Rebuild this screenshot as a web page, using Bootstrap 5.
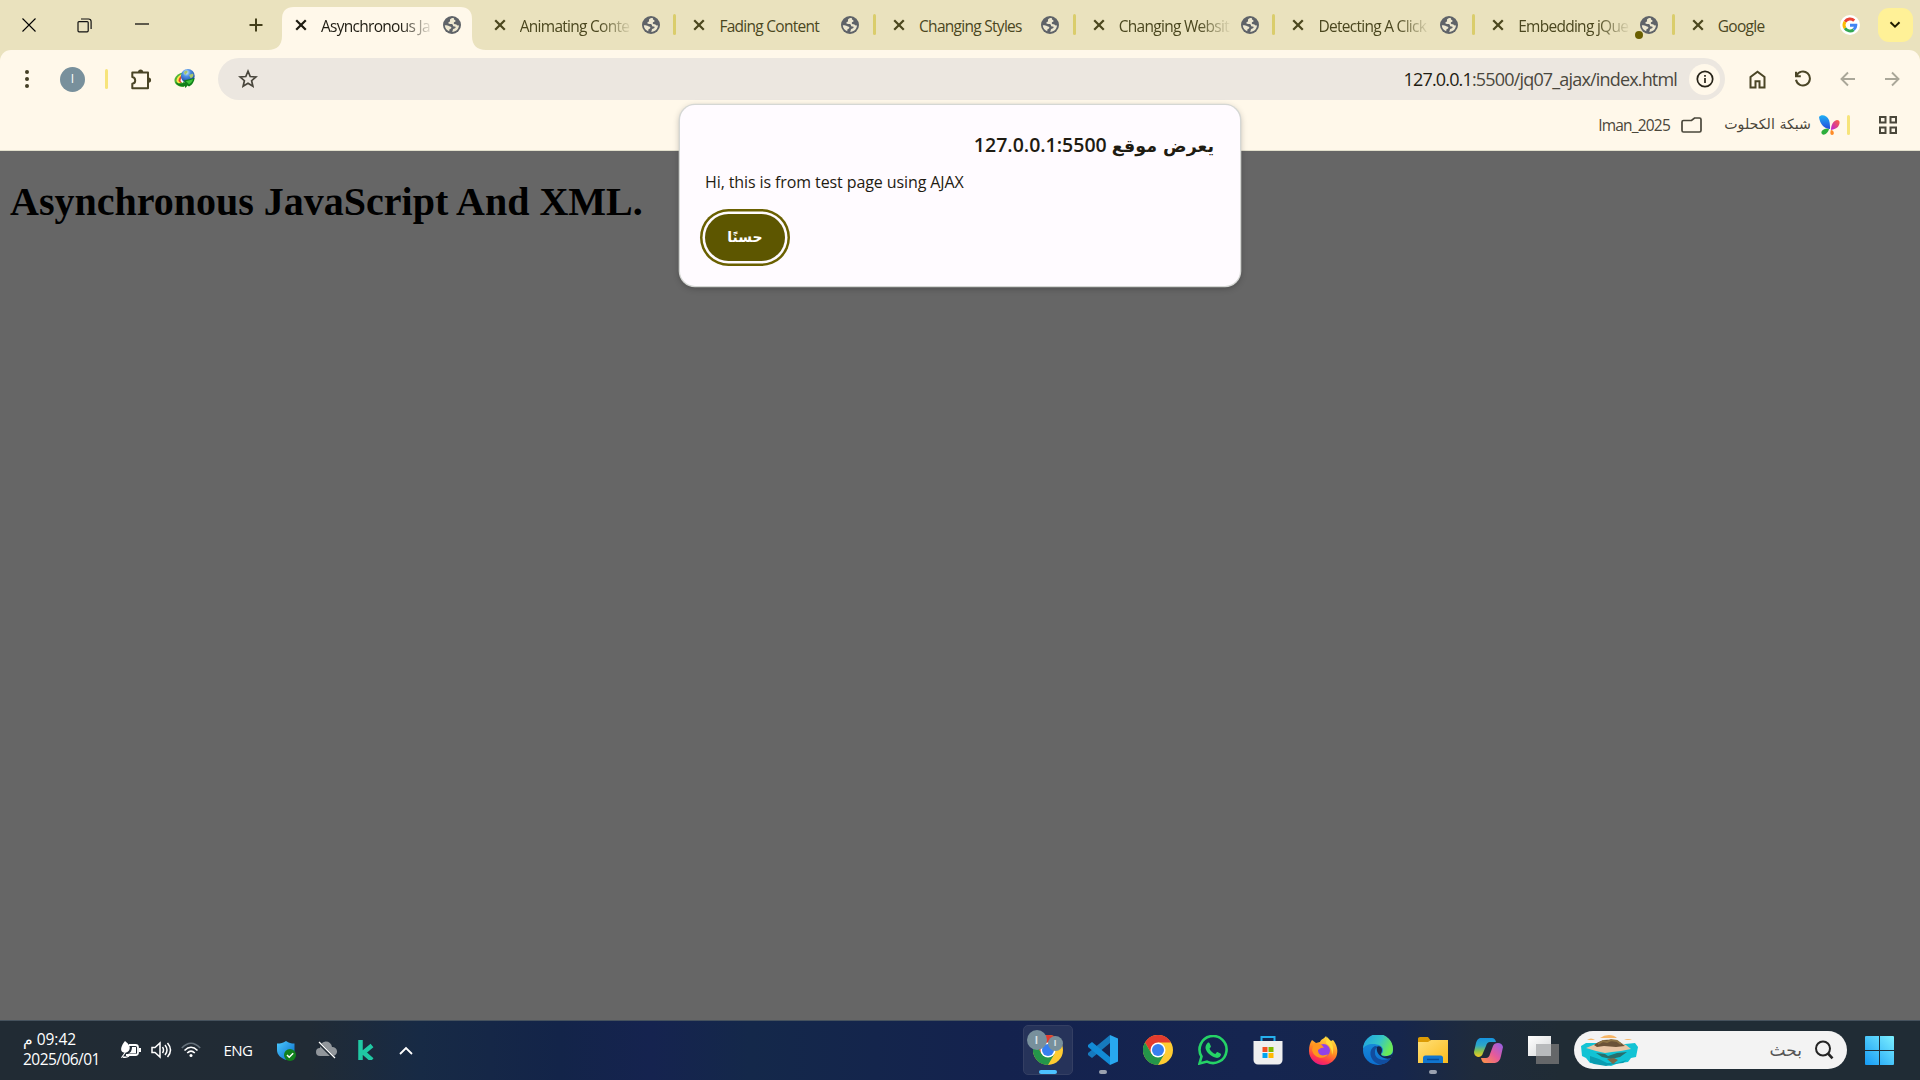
<!DOCTYPE html>
<html lang="ar">
<head>
<meta charset="utf-8">
<title>Asynchronous JavaScript And XML</title>
<link href="https://cdn.jsdelivr.net/npm/bootstrap@5.3.0/dist/css/bootstrap.min.css" rel="stylesheet">
<style>
html,body{height:100%}
body{width:1920px;height:1080px;overflow:hidden;background:#666;font-family:"Open Sans","DejaVu Sans",sans-serif;color:#1f1c12;line-height:1.2}
svg{display:block;flex:none}
.strip{height:50px;background:#eae2be}
.win-area{width:277px}
.cell{display:flex;align-items:center;justify-content:center;flex:none;height:100%}
.tab-item{width:199.7px;height:50px;position:relative;flex:none;padding-left:16px;color:#4b471f}
.tab-item .title{position:relative;width:113px;margin-left:13px;font-size:15.5px;letter-spacing:-.72px;white-space:nowrap;line-height:22px;padding-top:1px}
.faded{-webkit-mask-image:linear-gradient(90deg,#000 70%,transparent 100%);mask-image:linear-gradient(90deg,#000 70%,transparent 100%)}
.tab-item svg{position:relative}
.tab-item.divided::after{content:"";position:absolute;right:0;top:14px;width:3px;height:21px;border-radius:2px;background:#dacd6c}
.tab-item.current{color:#1f1c12;padding-left:17px}
.tab-shape{position:absolute!important;left:-9px;top:7px}
.globe{margin-left:9px}
.dot{position:absolute;left:160px;top:31px;width:8px;height:8px;border-radius:50%;background:#6a5f00}
.tab-search{width:35px;height:34px;border-radius:11px;background:#fff197;margin-left:3px}
.chrome-body{background:#fff8ea;height:101px;border-radius:11px 11px 0 0;border-bottom:1px solid #e2dfcc}
.toolbar{height:58px}
.avatar{width:25px;height:25px;border-radius:50%;background:#78909c;color:#fff;font-size:12px}
.bar-sep{width:3px;height:20px;border-radius:2px;background:#f7e47b;flex:none}
.omnibox{width:1507px;height:42px;border-radius:21px;background:#ece7e0;margin-left:6px}
.star{margin-left:20px}
.url{font-size:18px;letter-spacing:-.83px;color:#4a473e;white-space:nowrap;padding-top:1px}
.url b{font-weight:400;color:#1f1c12}
.info{width:31px;height:31px;border-radius:50%;background:#fff8ea;margin:0 5px 0 12px}
.bookmarks{height:42px;font-size:15.5px;color:#4b473b}
.page-title{font:bold 40px/46px "Liberation Serif",serif;color:#000;margin:28px 0 0 10px}
.alert-box{position:absolute;left:680px;top:105px;width:560px;height:181px;border-radius:15px;background:#fffbff;box-shadow:0 0 0 1.3px #d5d7d4,0 2px 7px rgba(0,0,0,.3);padding:26px 26px 0 25px}
.alert-head{font-size:19.5px;font-weight:600;letter-spacing:-1.45px;line-height:28px;text-align:right;white-space:nowrap}
.alert-head span{font-size:17.5px;letter-spacing:0}
.alert-text{font-size:16px;letter-spacing:-.1px;line-height:22px;margin-top:11px;white-space:nowrap}
.ok-btn{width:80px;height:47px;border-radius:24px;background:#5d5600;color:#fff;font-size:14px;font-weight:600;padding:0;border:0;box-shadow:0 0 0 2.5px #fffbff,0 0 0 5px #6a6000;margin-top:21px}
.page-area{height:869px}
.taskbar{height:60px;border-top:1px solid #46525d;padding-bottom:1px;background:linear-gradient(90deg,#212b34 0,#212b35 310px,#172a45 420px,#132449 560px,#15234f 650px,#14284a 750px,#14224e 1000px,#152550 1250px,#16264c 1400px,#1f2b3c 1475px,#202c35 1560px);color:#fff}
.clock{width:110px;padding-left:23px;font-size:15.5px;line-height:20px;letter-spacing:-.55px;white-space:nowrap;margin-top:-2px}
.app{width:55px;height:59px;position:relative;display:flex;align-items:center;justify-content:center;flex:none}
.app.running::after{content:"";position:absolute;bottom:6px;width:8px;height:4px;border-radius:2px;background:#9ba2b0}
.app.active::after{width:18px;background:#4cc2ff}
.app.active::before{content:"";position:absolute;inset:4px 2.5px 5px;border-radius:5px;background:#26335a;border:1px solid #343f63}
.app svg{position:relative}
.chip{position:absolute;border-radius:50%;background:#78909c;color:#dfe5e8;font-size:10px;font-weight:700;display:flex;align-items:center;justify-content:center}
.search-pill{width:273px;height:38px;border-radius:19px;background:#f3f3f3;color:#555;font-size:17px;margin-left:3.5px;padding:0 13px 0 6px}
.ar{font-family:"DejaVu Sans",sans-serif}
</style>
<script src="https://cdn.jsdelivr.net/npm/bootstrap@5.3.0/dist/js/bootstrap.bundle.min.js"></script>
</head>
<body>
<svg width="0" height="0" class="position-absolute">
<defs>
<linearGradient id="shieldG" x1="0" y1="0" x2="1" y2="1"><stop offset="0" stop-color="#4ccbff"/><stop offset="1" stop-color="#0868c8"/></linearGradient>
<linearGradient id="ffG" x1=".7" y1="0" x2=".3" y2="1"><stop offset="0" stop-color="#ffe642"/><stop offset=".5" stop-color="#ff8a22"/><stop offset=".8" stop-color="#ff354f"/><stop offset="1" stop-color="#e31587"/></linearGradient>
<linearGradient id="edgeG" x1="0" y1="0" x2="1" y2=".4"><stop offset="0" stop-color="#1d9fe4"/><stop offset=".6" stop-color="#35c5c7"/><stop offset="1" stop-color="#6aea58"/></linearGradient>
<linearGradient id="edgeB" x1="0" y1="0" x2="0" y2="1"><stop offset="0" stop-color="#1b94dc"/><stop offset="1" stop-color="#0c6fd0"/></linearGradient>
<linearGradient id="foldG" x1="0" y1="0" x2="1" y2="1"><stop offset="0" stop-color="#ffe079"/><stop offset="1" stop-color="#fbbb1c"/></linearGradient>
<linearGradient id="winG" x1="0" y1="1" x2="1" y2="0"><stop offset="0" stop-color="#159bf5"/><stop offset="1" stop-color="#7df0ff"/></linearGradient>
<linearGradient id="copA" x1="0" y1="0" x2="0" y2="1"><stop offset="0" stop-color="#1693df"/><stop offset=".4" stop-color="#2fa8c6"/><stop offset=".7" stop-color="#8fc447"/><stop offset="1" stop-color="#f7ca22"/></linearGradient>
<linearGradient id="copB" x1="1" y1="0" x2="0" y2="1"><stop offset="0" stop-color="#8f60ea"/><stop offset=".5" stop-color="#e65a9b"/><stop offset="1" stop-color="#ff983f"/></linearGradient>
<linearGradient id="bflyA" x1="0" y1="0" x2="0" y2="1"><stop offset="0" stop-color="#1fb0f4"/><stop offset="1" stop-color="#2449dd"/></linearGradient>
<linearGradient id="bflyB" x1="1" y1="0" x2="0" y2="1"><stop offset="0" stop-color="#ff6438"/><stop offset="1" stop-color="#bc20dc"/></linearGradient>
<linearGradient id="greyG" x1="0" y1="0" x2="1" y2="1"><stop offset="0" stop-color="#fff"/><stop offset="1" stop-color="#d6d8da"/></linearGradient>
<radialGradient id="ball" cx=".4" cy=".25" r=".8"><stop offset="0" stop-color="#d9f4ff"/><stop offset=".35" stop-color="#4f91e4"/><stop offset="1" stop-color="#103b91"/></radialGradient>
<symbol id="globe" viewBox="0 0 18 18"><circle cx="9" cy="9" r="9" fill="#5f6368"/><path d="M10.600 1.900C9 1.900 7.900 2.400 7.200 3.300c-.6.800.1 1.300-.2 1.900-.4.800-1.800.7-1.700 1.800.1.900 1.500.9 2.700.9 1.500 0 2 .6 2 1.500 0 .7.600 1 1.500 1 1.100 0 1.300.6 1 1.300-.4.900-1.700.6-2.300 1.200-.7.700-.1 1.700-1.200 2.900 3.900.1 6.900-2.900 7-6.600-1 .6-1.900.3-2.400-.5-.5-.9-1.500-.5-2.300-.8-.9-.4-.6-1.600.2-1.900.9-.3 1.300-.8.9-1.500-.5-.8-1.600-.7-1.500-1.500 0-.4.200-.7-.3-1.100zM1.800 9.300c.1 2.700 1.900 5.100 4.400 6 .3-.9-.1-1.400.4-2 .5-.6 1.700-.5 1.800-1.500.1-1.200-1.100-1.300-2.100-1.600-1.300-.4-2.500-1-4.500-.9z" fill="#eee8d0"/></symbol>
<symbol id="close" viewBox="0 0 12 12"><path d="M1.900 1.900l8.200 8.200M10.100 1.900l-8.200 8.200" stroke="currentColor" stroke-width="1.900"/></symbol>
<symbol id="chrome" viewBox="0 0 30 30"><circle cx="15" cy="15" r="15" fill="#ffcc32"/><path d="M2 7.500L8.500 18.700 15 15V7.500h13A15 15 0 0 0 2 7.500z" fill="#e33b2e"/><path d="M2 7.500A15 15 0 0 0 15 30l6.500-11.200-6.500 3-6.500-3z" fill="#24964a"/><circle cx="15" cy="15" r="7.500" fill="#fff"/><circle cx="15" cy="15" r="6" fill="#377ff0"/></symbol>
</defs></svg>

<header class="strip d-flex align-items-center">
 <div class="win-area d-flex h-100">
  <div class="cell" style="width:57px"><svg width="14" height="14" viewBox="0 0 14 14"><path d="M.5.5l13 13M13.5.5l-13 13" stroke="#000" stroke-width="1.1"/></svg></div>
  <div class="cell" style="width:55px"><svg width="15" height="15" viewBox="0 0 15 15" fill="none" stroke="#111" stroke-width="1.2"><rect x="1" y="3.6" width="10.2" height="10.2" rx="1"/><path d="M4 1h7.5a2.6 2.6 0 0 1 2.6 2.6V11"/></svg></div>
  <div class="cell" style="width:60px"><svg width="14" height="4"><path d="M0 1h14" stroke="#000" stroke-width="1.2"/></svg></div>
  <div class="cell ms-auto" style="width:42px"><svg width="14" height="14"><path d="M7 .5v13M.5 7h13" stroke="#443f1b" stroke-width="2"/></svg></div>
 </div>
 <nav class="d-flex">
  <div class="tab-item current d-flex align-items-center"><svg class="tab-shape" width="218" height="44" viewBox="0 0 218 44"><path d="M0 43c9 0 14-5 14-14V12Q14 0 26 0H192q12 0 12 12V29c0 9 5 14 14 14v1H0z" fill="#fff8ea"/></svg><svg width="14" height="14"><use href="#close"/></svg><div class="title faded">Asynchronous Ja</div><svg class="globe" width="18" height="18"><use href="#globe"/></svg></div>
  <div class="tab-item divided d-flex align-items-center"><svg width="14" height="14"><use href="#close"/></svg><div class="title faded">Animating Conte</div><svg class="globe" width="18" height="18"><use href="#globe"/></svg></div>
  <div class="tab-item divided d-flex align-items-center"><svg width="14" height="14"><use href="#close"/></svg><div class="title">Fading Content</div><svg class="globe" width="18" height="18"><use href="#globe"/></svg></div>
  <div class="tab-item divided d-flex align-items-center"><svg width="14" height="14"><use href="#close"/></svg><div class="title">Changing Styles</div><svg class="globe" width="18" height="18"><use href="#globe"/></svg></div>
  <div class="tab-item divided d-flex align-items-center"><svg width="14" height="14"><use href="#close"/></svg><div class="title faded">Changing Websit</div><svg class="globe" width="18" height="18"><use href="#globe"/></svg></div>
  <div class="tab-item divided d-flex align-items-center"><svg width="14" height="14"><use href="#close"/></svg><div class="title faded">Detecting A Click</div><svg class="globe" width="18" height="18"><use href="#globe"/></svg></div>
  <div class="tab-item divided d-flex align-items-center"><svg width="14" height="14"><use href="#close"/></svg><div class="title faded">Embedding jQue</div><svg class="globe" width="18" height="18"><use href="#globe"/></svg><span class="dot"></span></div>
  <div class="tab-item d-flex align-items-center"><svg width="14" height="14"><use href="#close"/></svg><div class="title">Google</div><svg class="globe" width="20" height="20" viewBox="0 0 20 20"><circle cx="10" cy="10" r="10" fill="#fff"/><g fill="none" stroke-width="3"><path d="M14.2 5.6A6 6 0 0 0 5 6.8" stroke="#ea4335"/><path d="M5 6.8a6 6 0 0 0 0 6.4" stroke="#fbbc04"/><path d="M5 13.2a6 6 0 0 0 8.700 1.500" stroke="#34a853"/><path d="M13.7 14.7A6 6 0 0 0 15.800 10.200H10" stroke="#4285f4"/></g></svg></div>
 </nav>
 <div class="tab-search d-flex align-items-center justify-content-center"><svg width="12" height="8"><path d="M1.5 1.2L6 5.7l4.500-4.500" fill="none" stroke="#1f1c00" stroke-width="2"/></svg></div>
</header>

<section class="strip h-auto"><div class="chrome-body">
 <div class="toolbar d-flex align-items-center">
  <div class="cell" style="width:54px"><svg width="4" height="18" fill="#443f25"><circle cx="2" cy="2" r="2"/><circle cx="2" cy="9" r="2"/><circle cx="2" cy="16" r="2"/></svg></div>
  <div class="cell" style="width:37px"><div class="avatar d-flex align-items-center justify-content-center">I</div></div>
  <div class="cell" style="width:31px"><span class="bar-sep"></span></div>
  <div class="cell" style="width:39px"><svg width="21" height="21" viewBox="0 0 21 21"><path d="M1.300 3.500H17v15.800H1.300v-4.600c1.700-.3 2.900-1.400 2.900-3.300 0-1.900-1.200-3-2.900-3.300z" fill="none" stroke="#4a4526" stroke-width="2" stroke-linejoin="round"/><path d="M7 3a2.600 2.600 0 0 1 5.200 0zM17.500 8.500a2.600 2.600 0 0 1 0 5.200z" fill="#4a4526"/></svg></div>
  <div class="cell pe-1" style="width:51px"><svg width="21" height="20" viewBox="0 0 21 20"><path d="M11 3C4 4 0 8 .5 12c.5 4 5 6 9.500 6z" fill="#4fb535"/><path d="M11 4C6 5 2.500 8 2.500 12l2 3 6-4z" fill="#ffe84a"/><path d="M11 4.500C7 6 4.500 9 4.500 12l2 2 5-4z" fill="#e8402e"/><path d="M11 6C8 7 6.500 9.500 6.500 12l2 2 4-5z" fill="#fff"/><circle cx="13.800" cy="7" r="6.900" fill="url(#ball)"/><path d="M10 3c2-2 4-1.500 3.500.5L11 6zM15 6l4-1.500c1 2 0 4.500-2.500 4.500z" fill="#a9c66a"/><path d="M1.500 13c4 2.500 7 2 9.500 0L9.500 11.500 20.500 9c0 3-2 7-5.500 8.500l-1.500-1L11.500 19l-1-2C7 18 3 17 1.500 13z" fill="#12801a"/><path d="M12 12.300l7-2c-.5 2-2 4-4 5z" fill="#3fc43a"/></svg></div>
  <div class="omnibox d-flex align-items-center">
   <svg class="star" width="20" height="20" viewBox="0 0 20 20"><path d="M10 2.200l2.200 5.300 5.700.5-4.300 3.700 1.300 5.600-4.900-3-4.900 3 1.300-5.600L2.100 8l5.700-.5z" fill="none" stroke="#49463c" stroke-width="1.700"/></svg>
   <div class="url ms-auto"><b>127.0.0.1</b>:5500/jq07_ajax/index.html</div>
   <div class="info d-flex align-items-center justify-content-center"><svg width="18" height="18" viewBox="0 0 18 18"><circle cx="9" cy="9" r="7.700" fill="none" stroke="#272318" stroke-width="1.700"/><path d="M9 8v5M9 5v1.700" stroke="#272318" stroke-width="1.700"/></svg></div>
  </div>
  <div class="cell" style="width:65px"><svg width="17" height="19" viewBox="0 0 17 19"><path d="M1.500 17.500V7L8.500 1.800l7 5.200v10.500h-5v-6.300h-4v6.300z" fill="none" stroke="#4a4526" stroke-width="2"/></svg></div>
  <div class="cell" style="width:25px"><svg width="18" height="18" viewBox="0 0 18 18"><path d="M2.500 5.600A7 7 0 1 1 2 9.800M2 1.800v4.500h4.800" fill="none" stroke="#4a4526" stroke-width="2"/></svg></div>
  <div class="cell" style="width:65px"><svg width="16" height="16"><path d="M15 8H2M8 1.500L1.500 8 8 14.500" fill="none" stroke="#aaa799" stroke-width="1.900"/></svg></div>
  <div class="cell" style="width:24px"><svg width="16" height="16"><path d="M1 8h13M8 1.500L14.500 8 8 14.500" fill="none" stroke="#aaa799" stroke-width="1.900"/></svg></div>
 </div>
 <div class="bookmarks d-flex align-items-center justify-content-end pb-2">
  <span style="letter-spacing:-.8px">Iman_2025</span>
  <svg width="21" height="16" viewBox="0 0 21 16" style="margin-left:11px"><path d="M2.500 3.500H10.500L13.500 1h5a1.500 1.500 0 0 1 1.500 1.500v11a1.500 1.500 0 0 1-1.500 1.500h-16A1.500 1.500 0 0 1 1 13.500V5a1.500 1.500 0 0 1 1.500-1.500z" fill="none" stroke="#4a473b" stroke-width="1.700"/></svg>
  <span class="ar text-end text-nowrap" dir="rtl" style="width:87px;font-size:14.2px;margin:0 8px 0 22px">شبكة الكحلوت</span>
  <svg width="21" height="20" viewBox="0 0 21 20"><path d="M0 2c2-3 8-2 10 3 1 3 1 6 1 9C6 14 1 10 0 2z" fill="url(#bflyA)"/><path d="M12 15c0-5 2-9 6-10 3 0 3 3 2 5-1 3-4 4-8 5z" fill="url(#bflyB)"/><path d="M10 14c-1 4-5 7-7 5s1-6 7-5z" fill="#2dae3c"/><path d="M12 15c3 0 4 5 1 5-2 0-2-3-1-5z" fill="#ff8c27"/></svg>
  <span class="bar-sep" style="margin:0 29px 0 7px"></span>
  <svg width="18" height="18" viewBox="0 0 18 18" fill="none" stroke="#4a473b" stroke-width="2" style="margin-right:23px"><path d="M1 1h5.500v5.500H1zM11.500 1H17v5.500h-5.500zM1 11.500h5.500V17H1zM11.500 11.500H17V17h-5.500z"/></svg>
 </div>
</div></section>

<main class="page-area overflow-hidden"><h1 class="page-title">Asynchronous JavaScript And XML.</h1></main>

<section class="alert-box" role="dialog">
 <div class="alert-head" dir="rtl"><span class="ar">يعرض موقع</span> <bdi>127.0.0.1:5500</bdi></div>
 <div class="alert-text">Hi, this is from test page using AJAX</div>
 <button class="ok-btn ar" type="button">حسنًا</button>
</section>

<footer class="taskbar d-flex align-items-center">
 <div class="clock"><div><bdi>م</bdi> <bdi>09:42</bdi></div><div>2025/06/01</div></div>
 <div class="cell" style="width:41px"><svg width="21" height="18" viewBox="0 0 21 18"><path d="M9 4h6.500q2.500 0 2.500 2.500v5q0 2.500-2.500 2.500H6" fill="none" stroke="#fff" stroke-width="1.800"/><path d="M12 6h4v6.500H8q4-1 4-6.500zM19 7h2v4h-2zM5 0C9 3 11 6 9 9.500 7 12 4 12 2.500 11 0 9 1 5 5 0zM1 16.500l5-7 .8.500L2 17z" fill="#fff"/><path d="M3 16q3 1 6-1" stroke="#fff" stroke-width="1.500" fill="none"/></svg></div>
 <div class="cell" style="width:20px"><svg width="21" height="18" viewBox="0 0 21 18" fill="none" stroke="#fff" stroke-width="1.500"><path d="M1 6.500h3L9 2v14l-5-4.500H1z"/><path d="M11.500 6q2 3 0 6M14 4q4 5 0 10M16.500 2q6 7 0 14"/></svg></div>
 <div class="cell" style="width:40px"><svg width="20" height="16" viewBox="0 0 20 16" fill="none" stroke="#fff" stroke-width="1.600"><path d="M.8 6Q10-3.500 19.200 6" stroke="#66717b"/><path d="M3.500 8.500q6.500-6.500 13 0M6.200 11q3.800-3.600 7.600 0"/><circle cx="10" cy="13.500" r="1.500" fill="#fff" stroke="none"/></svg></div>
 <div class="cell" style="width:54px;font-size:15px;letter-spacing:-.5px">ENG</div>
 <div class="cell" style="width:41px"><svg width="20" height="21" viewBox="0 0 20 21"><path d="M10 1c3 2 5 2.500 8.500 2.500V10c0 5-4 8-8.500 10C5 18 1 15 1 10V3.500C5 3.500 7 3 10 1z" fill="url(#shieldG)"/><circle cx="14" cy="15" r="6" fill="#11801c"/><path d="M11 15l2.200 2.200 4-4" fill="none" stroke="#fff" stroke-width="1.500"/></svg></div>
 <div class="cell" style="width:40px"><svg width="21" height="18" viewBox="0 0 21 18"><path d="M4 15a4 4 0 0 1 0-8 6 6 0 0 1 12-1 4.500 4.500 0 0 1 1 9z" fill="#91969b"/><path d="M2 1l16 16" stroke="#212b35" stroke-width="3"/><path d="M3 1l16 16" stroke="#fff" stroke-width="1.300"/></svg></div>
 <div class="cell" style="width:40px"><svg width="17" height="20" viewBox="0 0 17 20"><path d="M2.500 0v20M14 5.500L5.500 12.500 14 20" fill="none" stroke="#20c9a4" stroke-width="4.500"/></svg></div>
 <div class="cell" style="width:40px"><svg width="14" height="9"><path d="M1 8l6-6 6 6" fill="none" stroke="#fff" stroke-width="1.800"/></svg></div>

 <div class="d-flex align-items-center" style="margin-left:594.5px">
  <div class="app running active"><svg width="30" height="30"><use href="#chrome"/></svg><span class="chip" style="left:6px;top:9px;width:20px;height:20px">I</span><span class="chip" style="left:27px;top:15px;width:15px;height:15px;font-size:8px">I</span></div>
  <div class="app running"><svg width="30" height="30" viewBox="0 0 30 30"><path d="M22 0v8L4 23 0 20V18z" fill="#1679bd"/><path d="M22 30v-8L4 7 0 10v2z" fill="#128bd6"/><path d="M22 0l8 3.500v23L22 30z" fill="#28a8f0"/></svg></div>
  <div class="app"><svg width="30" height="30"><use href="#chrome"/></svg></div>
  <div class="app"><svg width="30" height="30" viewBox="0 0 30 30"><path d="M1.500 28.500l2-7A13.500 13.500 0 1 1 9 26.600z" fill="none" stroke="#25d366" stroke-width="2.600"/><path d="M10 7.500c1 0 1.300 0 1.700 1l1.200 2.800c.3.800-1.200 2-1.400 2.400 1.500 2.900 3.300 4.300 5.800 5.300.7-.5 1.500-2.200 2.200-2l3.300 1.700c.7.600-.2 3.500-2.700 4.100-2.300.5-6.300-.9-9-3.700-3.700-3.700-5.300-7.600-1.100-11.600z" fill="#25d366"/></svg></div>
  <div class="app"><svg width="30" height="30" viewBox="0 0 30 30"><path d="M8.500 8V2h13v6" fill="none" stroke="#25b0ed" stroke-width="2"/><path d="M.5 6h29v19a4.500 4.500 0 0 1-4.500 4.500H5A4.500 4.500 0 0 1 .5 25z" fill="#efefef"/><path d="M9.500 12h5v5h-5z" fill="#f25022"/><path d="M15.500 12h5v5h-5z" fill="#7fba00"/><path d="M9.500 18h5v5h-5z" fill="#00a4ef"/><path d="M15.500 18h5v5h-5z" fill="#ffb900"/></svg></div>
  <div class="app"><svg width="29" height="29" viewBox="0 0 29 29"><path d="M3 4l4 3 4-1c1-3 4-3 6-6 1 2 2 4 5 5l2-1c4 5 5 10 4 14-1 6-7 11-14 11C7 29 0 23 0 15 0 10 1 7 3 4z" fill="url(#ffG)"/><circle cx="14.500" cy="14.500" r="6.500" fill="#9142e8"/><path d="M5 7c5 0 8 1 10 5-3-1-4 1-6 2 0 5 4 7 10 4-3 6-14 5-16-4z" fill="#ff961f"/><path d="M18 1c5 4 8 11 5 18 0-5-1-8-6-12 0-2 1-4 1-6z" fill="#ffdc3b"/></svg></div>
  <div class="app"><svg width="30" height="30" viewBox="0 0 30 30"><circle cx="15" cy="15" r="15" fill="url(#edgeB)"/><path d="M0 14A15 15 0 0 1 30 14c0 5-3 7-7 7-3 0-5-1-5-2 0 0 2-1 2-4 0-4-5-6-10-6S1 11 0 14z" fill="url(#edgeG)"/><path d="M12 11c-7 3-6 14 3 18 6 1 11-2 13-6-8 4-16 1-16-5 0-3 0-5 4-6z" fill="#114d9f"/><path d="M14 12c2-2 5 0 5 3 0 2-1 3-1 4 0 2 3 3 6 2 3 0 4-1 6-3l-2 5c-8 3-16-5-14-11z" fill="#15254d"/></svg></div>
  <div class="app running"><svg width="30" height="28" viewBox="0 0 30 28"><path d="M0 2.500Q0 1 2 1h8l3 4h17v10H0z" fill="#dc9b05"/><path d="M0 6h10l3-2h17v23H0z" fill="url(#foldG)"/><path d="M5 27v-5q0-2.500 2.500-2.500h15Q25 19.500 25 22v5z" fill="#1175cf"/><path d="M9 23.500h12" stroke="#064c99" stroke-width="1.500"/></svg></div>
  <div class="app"><svg width="29" height="27" viewBox="0 0 29 27"><path d="M6 1h12q3 0 4 4H16q-3 0-4 4l-3 7q-1 4-5 4-4-1-4-5L2 6q1-4 4-5z" fill="url(#copA)"/><path d="M24 6q4 0 5 4l-2 9q-1 6-6 7H11q-3 0-4-5h5q3 0 4-4l3-8q1-3 5-3z" fill="url(#copB)"/></svg></div>
  <div class="app"><svg width="31" height="28" viewBox="0 0 31 28"><path d="M0 0h23v20H0z" fill="url(#greyG)"/><path d="M8 8h23v20H8z" fill="#777" opacity=".8"/><path d="M8 8h15v12H8z" fill="#b8babc"/></svg></div>
 </div>
 <div class="search-pill d-flex align-items-center">
  <svg width="59" height="34" viewBox="0 0 59 34"><path d="M1 13l5-3h9l30 1 10-1 3 4-2 10-5 1-3 4-9 1-8 3-12-2-9-1-4-5-4-2z" fill="#12c3d4"/><path d="M10 23l9 3 8 4h10l10-3-4 3-9 1-8 2-12-2-4-2z" fill="#0a9cb0"/><path d="M6 15l12-5 16-3 12 5 5 4-10 2-9 1-7 1-9-2z" fill="#e8c6a5"/><path d="M14 12c5-4 10-6 17-5 7 0 10 3 14 6l-9 1-12-1-7 1z" fill="#6b5337"/><path d="M18 11l5-3 4 1 4-2 6 1 4 3" fill="none" stroke="#8e7445" stroke-width="2"/><path d="M16 20l9 1 3 2 9-3 10-1-7 5-9 2-9-2z" fill="#286f6c"/><path d="M27 26l7-1 4 2-5 4z" fill="#7a6a4a"/><path d="M20 5q4-3 9-3t8 3zM7 7q4-3 8 0zM44 7q4-2 8 0z" fill="#f7b768"/></svg>
  <span class="ar ms-auto" dir="rtl" style="margin-right:12px">بحث</span>
  <svg width="20" height="20" viewBox="0 0 20 20"><circle cx="9" cy="8.500" r="7" fill="none" stroke="#252525" stroke-width="2"/><path d="M14 13.500l4.500 4.800" stroke="#252525" stroke-width="2.600"/></svg>
 </div>
 <svg style="margin-left:18px" width="29" height="29" viewBox="0 0 29 29"><path d="M1 0H14V14H0V1Q0 0 1 0zM15 0H28Q29 0 29 1V14H15zM0 15H14V29H1Q0 29 0 28zM15 15H29V28Q29 29 28 29H15z" fill="url(#winG)"/></svg>
</footer>
</body>
</html>
